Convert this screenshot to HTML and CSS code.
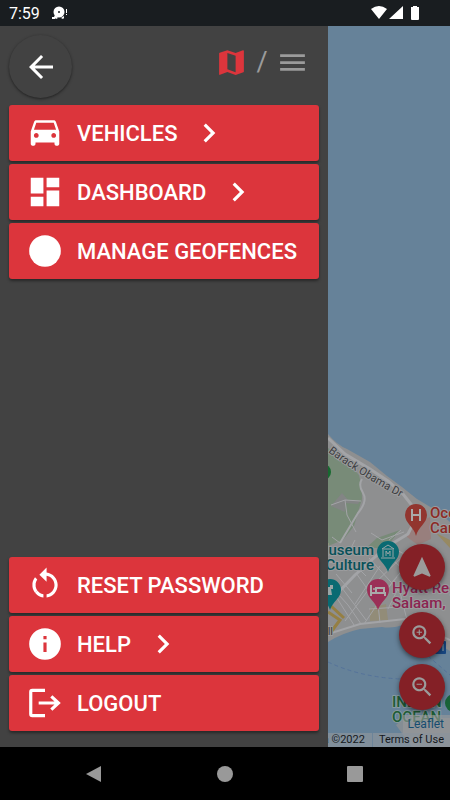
FILE: index.html
```html
<!DOCTYPE html>
<html lang="en">
<head>
<meta charset="utf-8">
<meta name="viewport" content="width=device-width, initial-scale=1">
<title>Vehicle tracker</title>
<link rel="stylesheet" href="styles.css">
</head>
<body>
<header class="status">
  <span class="status-time">7:59</span>
  <svg class="status-note" viewBox="0 0 18 14" aria-hidden="true"><circle cx="7" cy="6" r="5.500"/><circle cx="7" cy="6" r="1" class="hole"/><path d="M0 11h3v2H0zM3 9l3 3-2 1-2-2zM9 12l3-2v2l-1 1zM14 3h1v4h-1zM14 8h1v1h-1z"/></svg>
  <svg class="status-signals" viewBox="0 0 50 16" aria-hidden="true"><path d="M1 4Q9-2 17 4L9 14zM33 1v13H19zM43 1h4v1h2v12q0 1-1 1h-6q-1 0-1-1V2h2z"/></svg>
</header>

<main class="screen">
  <aside class="drawer">
    <div class="drawer-head">
      <button class="back" aria-label="Back"><svg viewBox="0 0 24 24"><path d="M20 11H7.830l5.590-5.590L12 4l-8 8 8 8 1.410-1.410L7.830 13H20z"/></svg></button>
      <div class="view-switch">
        <button class="view view-active" aria-label="Map view"><svg viewBox="0 0 24 24"><path d="M20.500 3l-.16.03L15 5.100 9 3 3.360 4.900c-.21.07-.36.25-.36.48V20.500c0 .28.22.5.5.5l.16-.03L9 18.900l6 2.100 5.640-1.900c.21-.07.36-.25.36-.48V3.500c0-.28-.22-.5-.5-.5zM15 19l-6-2.110V5l6 2.110z"/></svg></button>
        <span class="slash">/</span>
        <button class="view" aria-label="List view"><svg viewBox="0 0 24 24"><path d="M3 18h18v-2H3zm0-5h18v-2H3zm0-7v2h18V6z"/></svg></button>
      </div>
    </div>

    <nav class="menu">
      <button class="item"><svg viewBox="0 0 24 24"><path d="M18.920 5.010C18.720 4.420 18.160 4 17.500 4h-11c-.66 0-1.210.42-1.420 1.010L3 11v8c0 .55.45 1 1 1h1c.55 0 1-.45 1-1v-1h12v1c0 .55.45 1 1 1h1c.55 0 1-.45 1-1v-8zM6.500 15c-.83 0-1.500-.67-1.500-1.500S5.670 12 6.500 12s1.500.67 1.500 1.500S7.330 15 6.500 15zm11 0c-.83 0-1.500-.67-1.500-1.500s.67-1.500 1.500-1.500 1.500.67 1.500 1.500-.67 1.500-1.500 1.500zM5 10l1.500-4.500h11L19 10z"/></svg><span>VEHICLES</span><svg viewBox="0 0 24 24"><path d="M10 6L8.590 7.410 13.170 12l-4.580 4.590L10 18l6-6z"/></svg></button>
      <button class="item"><svg viewBox="0 0 24 24"><path d="M3 13h8V3H3zm0 8h8v-6H3zm10 0h8V11h-8zm0-18v6h8V3z"/></svg><span>DASHBOARD</span><svg viewBox="0 0 24 24"><path d="M10 6L8.590 7.410 13.170 12l-4.580 4.590L10 18l6-6z"/></svg></button>
      <button class="item"><svg viewBox="0 0 24 24"><circle cx="12" cy="12" r="10"/></svg><span>MANAGE GEOFENCES</span></button>
    </nav>

    <nav class="menu menu-account">
      <button class="item"><svg viewBox="0 0 24 24"><path d="M7.110 8.530L5.700 7.110C4.800 8.270 4.240 9.610 4.070 11v2c.17 1.390.72 2.730 1.620 3.890l1.410-1.420c-.52-.75-.87-1.590-1.010-2.470v-2c.14-.87.49-1.720 1.020-2.470z"/><path d="M5.690 16.890l1.410 1.430c1.160.9 2.510 1.440 3.900 1.610V17.900c-.87-.15-1.710-.49-2.460-1.030L7.100 15.470zM13 4.070V1L8.450 5.550 13 10V6.090c2.840.48 5 2.940 5 5.910s-2.160 5.430-5 5.910v2.020c3.950-.49 7-3.850 7-7.930s-3.050-7.440-7-7.930z"/></svg><span>RESET PASSWORD</span></button>
      <button class="item"><svg viewBox="0 0 24 24"><path d="M12 2a10 10 0 1 0 0 20 10 10 0 0 0 0-20zm1 15h-2v-6h2zm0-8h-2V7h2z"/></svg><span>HELP</span><svg viewBox="0 0 24 24"><path d="M10 6L8.590 7.410 13.170 12l-4.580 4.590L10 18l6-6z"/></svg></button>
      <button class="item"><svg viewBox="0 0 24 24"><path d="M12 4H4Q3 4 3 5V19Q3 20 4 20H12M8 12H20.500M16 7.800L20.500 12 16 16.200" fill="none" stroke="currentColor" stroke-width="2"/></svg><span>LOGOUT</span></button>
    </nav>
  </aside>

  <section class="map" aria-label="Map">
    <svg class="map-art" viewBox="328 26 122 721" preserveAspectRatio="xMinYMax slice">
      <path fill="#8e8f90" d="M328 434Q337 445 347 449L370 462 387 476 402 487 417 499 437 511 450 522V651L436 643 425 636 405 624Q393 629 382 627L360 629Q342 633 328 642z"/>
      <path fill="#788b78" d="M328 448L345 460 359 475Q362 486 362 499L358 512 354 526 343 540 328 546z"/>
      <path fill="#788b78" d="M377 538L400 530 386 548H366z"/>
      <path fill="#838585" d="M331 506L342 493 348 500 360 501 358 504 346 503 345 512z"/>
      <path fill="#987f7d" d="M409 527L430 517 431 539 418 545 407 537z"/>
      <path fill="#928c78" d="M370 608L386 604 388 620 370 621z"/>
      <g fill="none" stroke="#a3a4a7" stroke-width="3">
        <path d="M328 438L345 454 370 469 388 481 403 494 414 508"/>
        <path d="M362 479Q358 485 363 493T358 513L340 543" stroke-width="2"/>
        <path d="M328 603L355 575 385 548 408 534 418 514"/>
        <path d="M328 634L360 624 405 619 450 640" stroke-width="2"/>
      </g>
      <g fill="none" stroke="#a3a4a7" stroke-width="1">
        <path d="M331 505L345 500 361 501M345 500L347 515 356 532M332 537L340 543M371 533L382 540 404 532M389 540L401 530M387 545L410 557 430 590M369 558L400 592 407 620M356 573L378 604 380 623M342 588L366 620M335 595L354 625M345 621L369 589 405 554M364 624L393 581 422 548M328 583L348 605 361 624M351 561L366 576M336 574L352 593M380 566L355 604M397 577L376 603M411 562L388 609M369 609L400 607M388 556L404 570M328 562L351 565M413 545L419 559M355 540L349 552"/>
      </g>
      <path d="M328 612L340 620 331 632M331 606L344 618" fill="none" stroke="#957f43" stroke-width="3"/>
      <path d="M436 533L450 540V548z" fill="#978962"/>
      <g fill="none" stroke="#557399" stroke-dasharray="4 3"><path d="M328 662Q360 677 400 679"/><path d="M428 656L450 675"/></g>
      <path fill="#858d94" d="M396 725L404 718H450V747H412z"/>
      <circle cx="323" cy="472" r="8" fill="#16692f"/>
      <circle cx="454" cy="703" r="9" fill="#196338"/>
      <rect x="435" y="641" width="11" height="13" rx="1" fill="#174681"/>
      <path d="M443 644v7" stroke="#9aa5a6"/>

      <path fill="#92352f" d="M416 536C414 527 405 523 405 515A11 11 0 0 1 427 515C427 523 418 527 416 536z"/>
      <path d="M412 509v12M420 509v12M412 515h8" stroke="#aaa" stroke-width="2"/>
      <path fill="#096a72" d="M388 572C386 564 377 560 377 552A11 11 0 0 1 399 552C399 560 390 564 388 572z"/>
      <path d="M382 549l6-4 6 4zM383 550v7M393 550v7M381 558h14M386 556v-5l2 3 2-3v5" fill="none" stroke="#9aa5a6"/>
      <path fill="#096a72" d="M330 610C328 602 319 598 319 590A11 11 0 0 1 341 590C341 598 332 602 330 610z"/>
      <path d="M325 585h3v2h2v-2h3v4h-2l1 6h-7z" fill="#9aa5a6"/>
      <path fill="#9b3057" d="M378 610C376 602 367 598 367 590A11 11 0 0 1 389 590C389 598 380 602 378 610z"/>
      <path d="M371 585v11M371 593h14v3M384 593v-5h-8v4" fill="none" stroke="#aaa" stroke-width="2"/>
      <circle cx="374" cy="589" r="1" fill="#aaa"/>

      <path id="road" d="M328 452Q365 479 406 500" fill="none"/>
      <g class="label">
        <text class="road"><textPath href="#road">Barack Obama Dr</textPath></text>
        <text class="hospital" x="430" y="518">Ocean Road</text>
        <text class="hospital" x="430" y="533">Cancer</text>
        <text class="museum" x="374" y="555" text-anchor="end">Museum</text>
        <text class="museum" x="374" y="570" text-anchor="end">Culture</text>
        <text class="hotel" x="392" y="593">Hyatt Regency</text>
        <text class="hotel" x="392" y="608">Salaam,</text>
        <text class="road" x="333" y="635" text-anchor="end">ll</text>
        <text class="ocean" x="392" y="707">INDIAN</text>
        <text class="ocean" x="392" y="722">OCEAN</text>
      </g>
    </svg>

    <div class="map-actions">
      <button class="fab fab-locate" aria-label="Centre map"><svg viewBox="0 0 24 24"><path d="M12 2.500L4 20l1 1 7-3 7 3 1-1z"/></svg></button>
      <button class="fab" aria-label="Zoom in"><svg viewBox="0 0 24 24"><path d="M15.500 14h-.79l-.28-.27A6.500 6.500 0 1 0 13.730 14.430l.27.28v.79l5 4.990L20.490 19zm-6 0a4.500 4.500 0 1 1 0-9 4.500 4.500 0 0 1 0 9zM12 10h-2v2H9v-2H7V9h2V7h1v2h2z"/></svg></button>
      <button class="fab" aria-label="Zoom out"><svg viewBox="0 0 24 24"><path d="M15.500 14h-.79l-.28-.27A6.500 6.500 0 1 0 13.730 14.430l.27.28v.79l5 4.990L20.490 19zm-6 0a4.500 4.500 0 1 1 0-9 4.500 4.500 0 0 1 0 9zM7 9h5v1H7z"/></svg></button>
    </div>
    <div class="credits">
      <a class="leaflet" href="#">Leaflet</a>
      <div class="legal"><span class="legal-data">Map data ©2022</span><a class="legal-terms" href="#">Terms of Use</a></div>
    </div>
  </section>
</main>

<footer class="system-nav">
  <button aria-label="System back"><svg viewBox="0 0 18 18"><path d="M1 9L16 1V17z"/></svg></button>
  <button aria-label="Home"><svg viewBox="0 0 18 18"><circle cx="9" cy="9" r="8"/></svg></button>
  <button aria-label="Recent apps"><svg viewBox="0 0 18 18"><rect x="1" y="1" width="16" height="16" rx="1"/></svg></button>
</footer>
</body>
</html>
```
FILE: styles.css
```css
* { box-sizing: border-box; }

body {
  margin: 0;
  min-height: 100vh;
  display: flex;
  flex-direction: column;
  background: #000;
  font-family: Roboto, "Liberation Sans", sans-serif;
}

button {
  margin: 0;
  padding: 0;
  border: 0;
  background: none;
  color: inherit;
  font: inherit;
}

svg { display: block; fill: currentColor; }
a { text-decoration: none; }

.status {
  height: 26px;
  padding: 0 30px 0 9px;
  display: flex;
  align-items: center;
  background: #191d20;
  color: #fff;
}
.status-time { font-size: 16px; line-height: 26px; padding-top: 2px; }
.status-note { width: 18px; height: 14px; margin-left: 12px; }
.status-note .hole { fill: #191d20; }
.status-signals { width: 50px; height: 16px; margin-left: auto; }

.screen { flex: 1; display: flex; }

.drawer {
  width: 328px;
  padding: 9px 9px 16px;
  display: flex;
  flex-direction: column;
  background: #424242;
}

.drawer-head {
  display: flex;
  justify-content: space-between;
  align-items: flex-start;
  margin-bottom: 7px;
}

.back {
  width: 63px;
  height: 63px;
  display: grid;
  place-items: center;
  border-radius: 50%;
  background: #424242;
  color: #fff;
  box-shadow: 0 1px 3px rgba(0, 0, 0, .5);
}
.back svg { width: 36px; height: 36px; }

.view-switch {
  display: flex;
  align-items: center;
  padding: 11px 10px 0 0;
  color: #9b9b9b;
}
.view svg { width: 33px; height: 33px; }
.view-active { color: #dc353c; }
.slash {
  width: 28px;
  text-align: center;
  font-size: 27px;
  line-height: 33px;
}

.menu { display: flex; flex-direction: column; gap: 3px; }
.menu-account { margin-top: auto; }

.item {
  height: 56px;
  padding: 0 17px;
  display: flex;
  align-items: center;
  gap: 13px;
  border-radius: 3px;
  background: #dc353c;
  color: #fff;
  font-size: 22px;
  font-weight: 500;
  white-space: nowrap;
  box-shadow: 0 2px 3px rgba(0, 0, 0, .4);
}
.item svg { width: 38px; height: 38px; flex: none; }

.map {
  position: relative;
  flex: 1;
  min-width: 0;
  overflow: hidden;
  background: #668299;
}
.map-art { position: absolute; inset: 0; width: 100%; height: 100%; }

.label text {
  font-size: 15px;
  font-weight: 500;
  stroke: #9b9c9e;
  stroke-width: 2px;
  stroke-linejoin: round;
  paint-order: stroke;
}
.label .road { font-size: 11px; font-weight: 400; fill: #3b3d40; }
.label .hospital { fill: #8c2b26; }
.label .museum { fill: #075159; }
.label .hotel { fill: #8b2450; }
.label .ocean { fill: #1d5c36; stroke: #889aa0; }

.map-actions {
  position: absolute;
  right: 5px;
  bottom: 37px;
  display: flex;
  flex-direction: column;
  gap: 6px;
}
.fab {
  width: 46px;
  height: 46px;
  display: grid;
  place-items: center;
  border-radius: 50%;
  background: #842026;
  color: #9b9b9b;
  box-shadow: 0 2px 5px rgba(0, 0, 0, .5);
}
.fab-locate { margin-bottom: 16px; }
.fab svg { width: 26px; height: 26px; }

.credits {
  position: absolute;
  right: 0;
  bottom: 0;
  display: flex;
  flex-direction: column;
  align-items: flex-end;
  font-size: 12px;
  line-height: 14px;
}
.leaflet {
  padding: 2px 6px 2px 5px;
  background: rgba(153, 153, 153, .6);
  color: #164d70;
}
.legal {
  display: flex;
  white-space: nowrap;
  font-size: 11px;
  color: #15191d;
  background: rgba(145, 151, 157, .65);
}
.legal-data { padding-right: 7px; border-right: 1px solid #6c8499; }
.legal-terms { padding: 0 6px; color: inherit; }

.system-nav {
  height: 53px;
  padding: 0 86px 0 85px;
  display: flex;
  align-items: center;
  justify-content: space-between;
  background: #000;
  color: #999;
}
.system-nav svg { width: 18px; height: 18px; }
```
